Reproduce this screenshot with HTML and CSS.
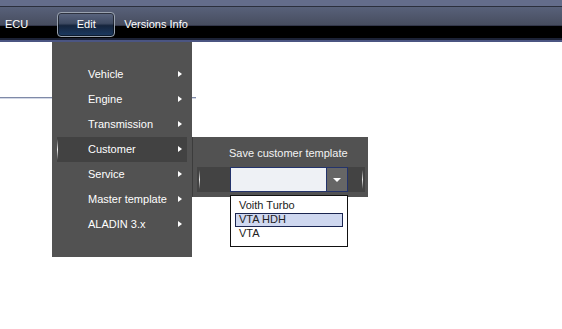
FILE: index.html
```html
<!DOCTYPE html>
<html>
<head>
<meta charset="utf-8">
<link rel="stylesheet" href="styles.css">
</head>
<body>
<header class="topbar">
  <nav class="menubar">
    <span class="mi ecu">ECU</span>
    <span class="mi edit">Edit</span>
    <span class="mi versions">Versions Info</span>
  </nav>
</header>
<main class="content">
  <div class="rule"></div>
</main>

<div class="menu">
  <div class="row"><span>Vehicle</span><i class="arrow"></i></div>
  <div class="row"><span>Engine</span><i class="arrow"></i></div>
  <div class="row"><span>Transmission</span><i class="arrow"></i></div>
  <div class="row hl"><span>Customer</span><i class="arrow"></i></div>
  <div class="row"><span>Service</span><i class="arrow"></i></div>
  <div class="row"><span>Master template</span><i class="arrow"></i></div>
  <div class="row"><span>ALADIN 3.x</span><i class="arrow"></i></div>
</div>

<div class="submenu">
  <div class="sub-title">Save customer template</div>
  <div class="band">
    <div class="combo">
      <div class="combo-field"></div>
      <div class="combo-btn"><i class="down"></i></div>
    </div>
  </div>
</div>

<ul class="list">
  <li>Voith Turbo</li>
  <li class="sel">VTA HDH</li>
  <li>VTA</li>
</ul>
</body>
</html>
```
FILE: styles.css
```css
* { box-sizing: border-box; }
html, body { margin: 0; padding: 0; }
body {
  width: 562px;
  height: 329px;
  background: #fff;
  font-family: "Liberation Sans", Arial, sans-serif;
  font-size: 11px;
  overflow: hidden;
  position: relative;
}
.topbar {
  height: 42px;
  background: linear-gradient(to bottom,
    #646d8b 0, #646d8b 6px,
    #2b2f3c 6px, #2b2f3c 7px,
    #58617a 7px, #474d5f 25px,
    #33374a 25px, #33374a 26px,
    #000 26px, #000 38px,
    #1c2236 38px, #1c2236 40px,
    #4b5582 40px, #4b5582 42px);
}
.menubar {
  display: flex;
  align-items: center;
  padding-top: 12px;
  height: 37px;
}
.mi {
  color: #fff;
  line-height: 25px;
  height: 25px;
}
.ecu { margin-left: 5px; }
.edit {
  margin-left: 29px;
  width: 58px;
  text-align: center;
  border: 1px solid #9aa3b0;
  border-radius: 4px;
  line-height: 23px;
  background: linear-gradient(to bottom, #5b6680 0, #3f4b63 45%, #15253d 55%, #1c3a62 100%);
  box-shadow: inset 0 0 0 1px rgba(0,0,0,0.5);
}
.versions { margin-left: 9px; }

.content { padding-top: 55px; }
.rule {
  width: 196px;
  height: 2px;
  border-top: 1px solid #7f8aa8;
  background: #d3d8e6;
}

.menu {
  position: absolute;
  left: 52px;
  top: 42px;
  width: 140px;
  height: 215px;
  background: #525252;
  padding-top: 20px;
}
.row {
  display: flex;
  align-items: center;
  justify-content: space-between;
  height: 25px;
  margin: 0 5px 0 5px;
  padding: 0 5px 2px 31px;
  color: #fff;
  position: relative;
}
.row.hl { background: #424242; }
.row.hl::before {
  content: "";
  position: absolute;
  left: 0;
  top: 2px;
  width: 1px;
  height: 21px;
  background: linear-gradient(to bottom, rgba(255,255,255,0), #f0f0f0 50%, rgba(255,255,255,0));
}
.arrow {
  width: 0;
  height: 0;
  margin-top: 1px;
  border-left: 4px solid #fff;
  border-top: 3px solid transparent;
  border-bottom: 3px solid transparent;
}

.submenu {
  position: absolute;
  left: 192px;
  top: 137px;
  width: 176px;
  height: 60px;
  background: #525252;
  border-left: 1px solid #3c3c3c;
}
.sub-title {
  color: #f2f2f2;
  padding: 10px 0 0 36px;
  line-height: 13px;
  height: 30px;
}
.band {
  position: relative;
  margin: 0 3px 0 4px;
  height: 25px;
  background: #434343;
  padding-left: 33px;
}
.band::before, .band::after {
  content: "";
  position: absolute;
  top: 3px;
  width: 1px;
  height: 19px;
  background: linear-gradient(to bottom, rgba(255,255,255,0), #e8e8e8 50%, rgba(255,255,255,0));
}
.band::before { left: 2px; }
.band::after { right: 2px; }
.combo {
  display: flex;
  width: 118px;
  height: 25px;
  border: 1px solid #23336b;
}
.combo-field {
  flex: 1;
  background: #eef1f5;
}
.combo-btn {
  width: 21px;
  background: #666;
  border-left: 1px solid #23336b;
  display: flex;
  align-items: center;
  justify-content: center;
}
.down {
  width: 0;
  height: 0;
  border-top: 4px solid #fff;
  border-left: 4px solid transparent;
  border-right: 4px solid transparent;
}

.list {
  position: absolute;
  left: 230px;
  top: 195px;
  width: 118px;
  height: 52px;
  margin: 0;
  padding: 3px 4px;
  list-style: none;
  background: #fff;
  border: 1px solid #111;
  color: #222;
}
.list li {
  height: 14px;
  line-height: 11px;
  padding-left: 3px;
  border: 1px solid transparent;
}
.list li.sel {
  background: #cfd8f0;
  border-color: #1a2550;
}
```
